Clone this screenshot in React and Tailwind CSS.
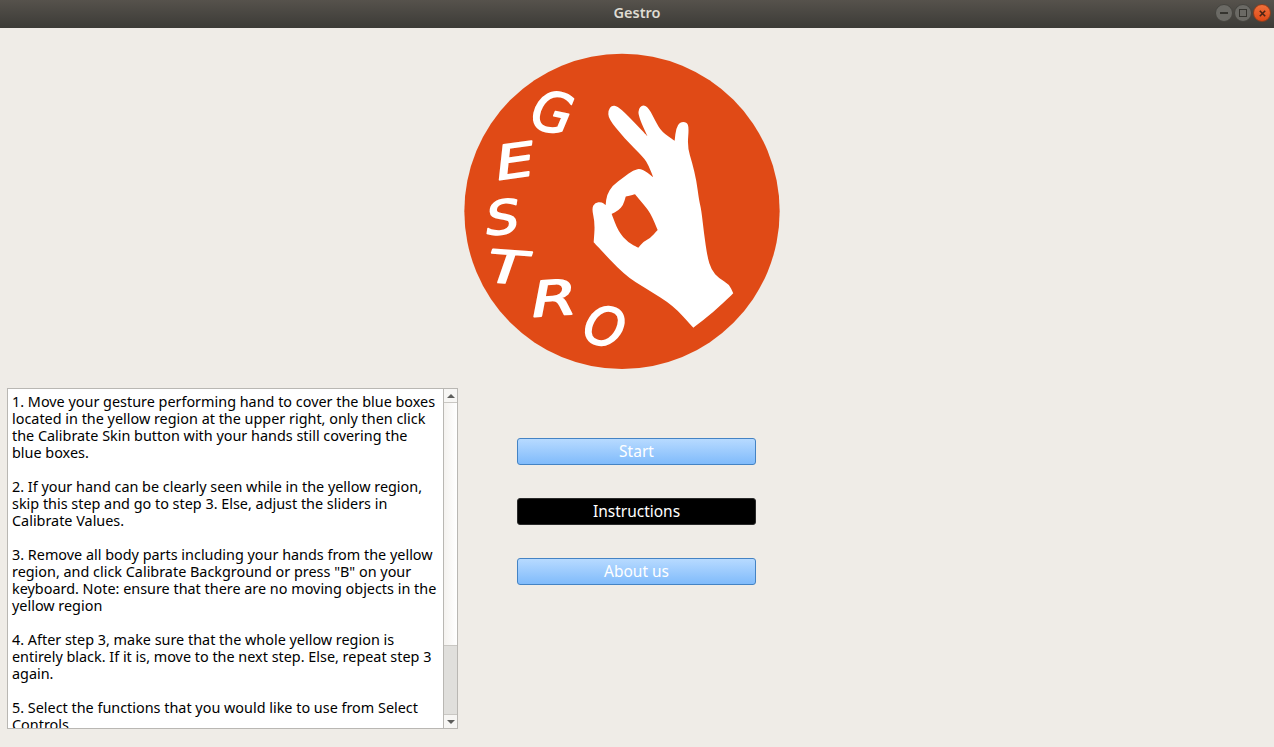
import React from 'react';

const pasos = [
  ['1. Move your gesture performing hand to cover the blue boxes', 'located in the yellow region at the upper right, only then click', 'the Calibrate Skin button with your hands still covering the', 'blue boxes.'],
  ['2. If your hand can be clearly seen while in the yellow region,', 'skip this step and go to step 3. Else, adjust the sliders in', 'Calibrate Values.'],
  ['3. Remove all body parts including your hands from the yellow', 'region, and click Calibrate Background or press "B" on your', 'keyboard. Note: ensure that there are no moving objects in the', 'yellow region'],
  ['4. After step 3, make sure that the whole yellow region is', 'entirely black. If it is, move to the next step. Else, repeat step 3', 'again.'],
  ['5. Select the functions that you would like to use from Select', 'Controls'],
];

// letra, x, y, tamaño, ancho, giro
const letras = [
  ['G', 206, 232, 165, 0.95, 12],
  ['E', 115, 390, 140, 1.3, -8],
  ['S', 82, 555, 140, 1.12, -4],
  ['T', 82, 695, 135, 1.4, 4],
  ['R', 218, 800, 145, 1.35, -4],
  ['O', 362, 870, 160, 0.95, 14],
];

// los puntos repetidos quedan como esquina
const mano = [[445,180],[455,166],[472,168],[500,193],[562,258],[562,258],[540,210],[533,180],[548,163],[567,175],[587,215],[605,245],[644,272],[644,272],[648,235],[660,216],[680,216],[687,232],[682,290],[697,340],[709,390],[717,450],[724,480],[732,550],[742,620],[754,660],[777,685],[807,702],[820,730],[820,730],[760,787],[700,833],[700,833],[640,767],[560,717],[495,677],[401,577],[401,577],[405,520],[395,475],[405,458],[425,456],[437,465],[437,465],[440,435],[458,406],[490,383],[520,360],[545,355],[580,382],[580,382],[565,345],[553,325],[490,262],[445,205]];
const hueco = [[455,492],[455,492],[475,482],[490,465],[497,440],[497,440],[525,433],[525,433],[550,462],[572,490],[593,540],[593,540],[570,565],[550,575],[535,593],[535,593],[505,578],[475,545]];

// curva suave por los puntos medios
const suave = (pts) => {
  const medio = (a, b) => [(a[0] + b[0]) / 2, (a[1] + b[1]) / 2];
  let d = `M${medio(pts[pts.length - 1], pts[0]).join(' ')}`;
  pts.forEach((p, i) => {
    d += ` Q${p.join(' ')} ${medio(p, pts[(i + 1) % pts.length]).join(' ')}`;
  });
  return d + ' Z';
};

function Logo() {
  return (
    <svg viewBox="0 0 975 975" className="w-[325px] h-[325px] ml-[460px] block">
      <circle cx="486" cy="484" r="473" fill="#e04a16" />
      <path fill="#ffffff" fillRule="evenodd" d={`${suave(mano)} ${suave(hueco)}`} />
      {letras.map(([l, x, y, s, w, r]) => (
        <text
          key={l}
          fontSize={s}
          fill="#ffffff"
          stroke="#ffffff"
          strokeWidth="5"
          strokeLinejoin="round"
          fontFamily="'DejaVu Sans', sans-serif"
          fontStyle="italic"
          transform={`translate(${x} ${y}) rotate(${r}) scale(${w} 1)`}
        >
          {l}
        </text>
      ))}
    </svg>
  );
}

function Boton({ texto, activo }) {
  return (
    <button
      className={`h-[27px] w-[239px] rounded-[3px] border text-[15.5px] leading-none text-white ${
        activo ? 'bg-black border-[#2a2a2a]' : 'bg-gradient-to-b from-[#b7daff] to-[#80bbfb] border-[#4483c4]'
      }`}
    >
      {texto}
    </button>
  );
}

export default function App() {
  return (
    <div className="w-[1274px] h-[747px] overflow-hidden bg-[#efece7] font-['Noto_Sans',sans-serif]">
      <div className="relative h-7 flex items-center justify-center pb-[2px] bg-gradient-to-b from-[#56524c] to-[#3c3b37]">
        <span className="text-[14.5px] font-semibold text-[#dfdbd2]">Gestro</span>
        <div className="absolute right-[3px] top-[4px] flex gap-[1px]">
          <div className="w-[18px] h-[18px] rounded-full bg-[#6b6a65] border border-[#45443f] flex items-center justify-center">
            <div className="w-[8px] h-[2px] bg-[#35342f]"></div>
          </div>
          <div className="w-[18px] h-[18px] rounded-full bg-[#6b6a65] border border-[#45443f] flex items-center justify-center">
            <div className="w-[8px] h-[8px] border border-[#35342f]"></div>
          </div>
          <div className="w-[18px] h-[18px] rounded-full bg-gradient-to-b from-[#f0703a] to-[#dd4814] border border-[#8f3d1c] flex items-center justify-center">
            <svg viewBox="0 0 10 10" className="w-[9px] h-[9px]">
              <path d="M2 2 L8 8 M8 2 L2 8" stroke="#4a2415" strokeWidth="1.8" />
            </svg>
          </div>
        </div>
      </div>

      <div className="pt-[22px]">
        <Logo />
      </div>

      <div className="flex pl-[7px] mt-[13px]">
        <div className="w-[451px] h-[341px] border border-[#b9b7b3] bg-white flex">
          <div className="flex-1 overflow-hidden pl-[4px] pt-[4px] text-[14.4px] leading-[17px] text-black">
            {pasos.map((lineas, i) => (
              <div key={i} className="mb-[17px]">
                {lineas.map((linea) => (
                  <div key={linea} className="whitespace-nowrap">{linea}</div>
                ))}
              </div>
            ))}
          </div>
          <div className="w-[14px] border-l border-[#b9b7b3] flex flex-col">
            <div className="h-[14px] border-b border-[#c9c7c3] flex items-center justify-center bg-[#f7f6f4]">
              <div className="w-0 h-0 border-l-[4px] border-r-[4px] border-b-[4px] border-l-transparent border-r-transparent border-b-[#5e5e5c]"></div>
            </div>
            <div className="h-[243px] bg-gradient-to-r from-[#f4f2ef] to-white border-b border-[#c9c7c3]"></div>
            <div className="flex-1 bg-[#e0dfdc]"></div>
            <div className="h-[14px] border-t border-[#c9c7c3] flex items-center justify-center bg-[#f7f6f4]">
              <div className="w-0 h-0 border-l-[4px] border-r-[4px] border-t-[4px] border-l-transparent border-r-transparent border-t-[#5e5e5c]"></div>
            </div>
          </div>
        </div>

        <div className="ml-[59px] pt-[50px] flex flex-col gap-[33px]">
          <Boton texto="Start" />
          <Boton texto="Instructions" activo />
          <Boton texto="About us" />
        </div>
      </div>
    </div>
  );
}
